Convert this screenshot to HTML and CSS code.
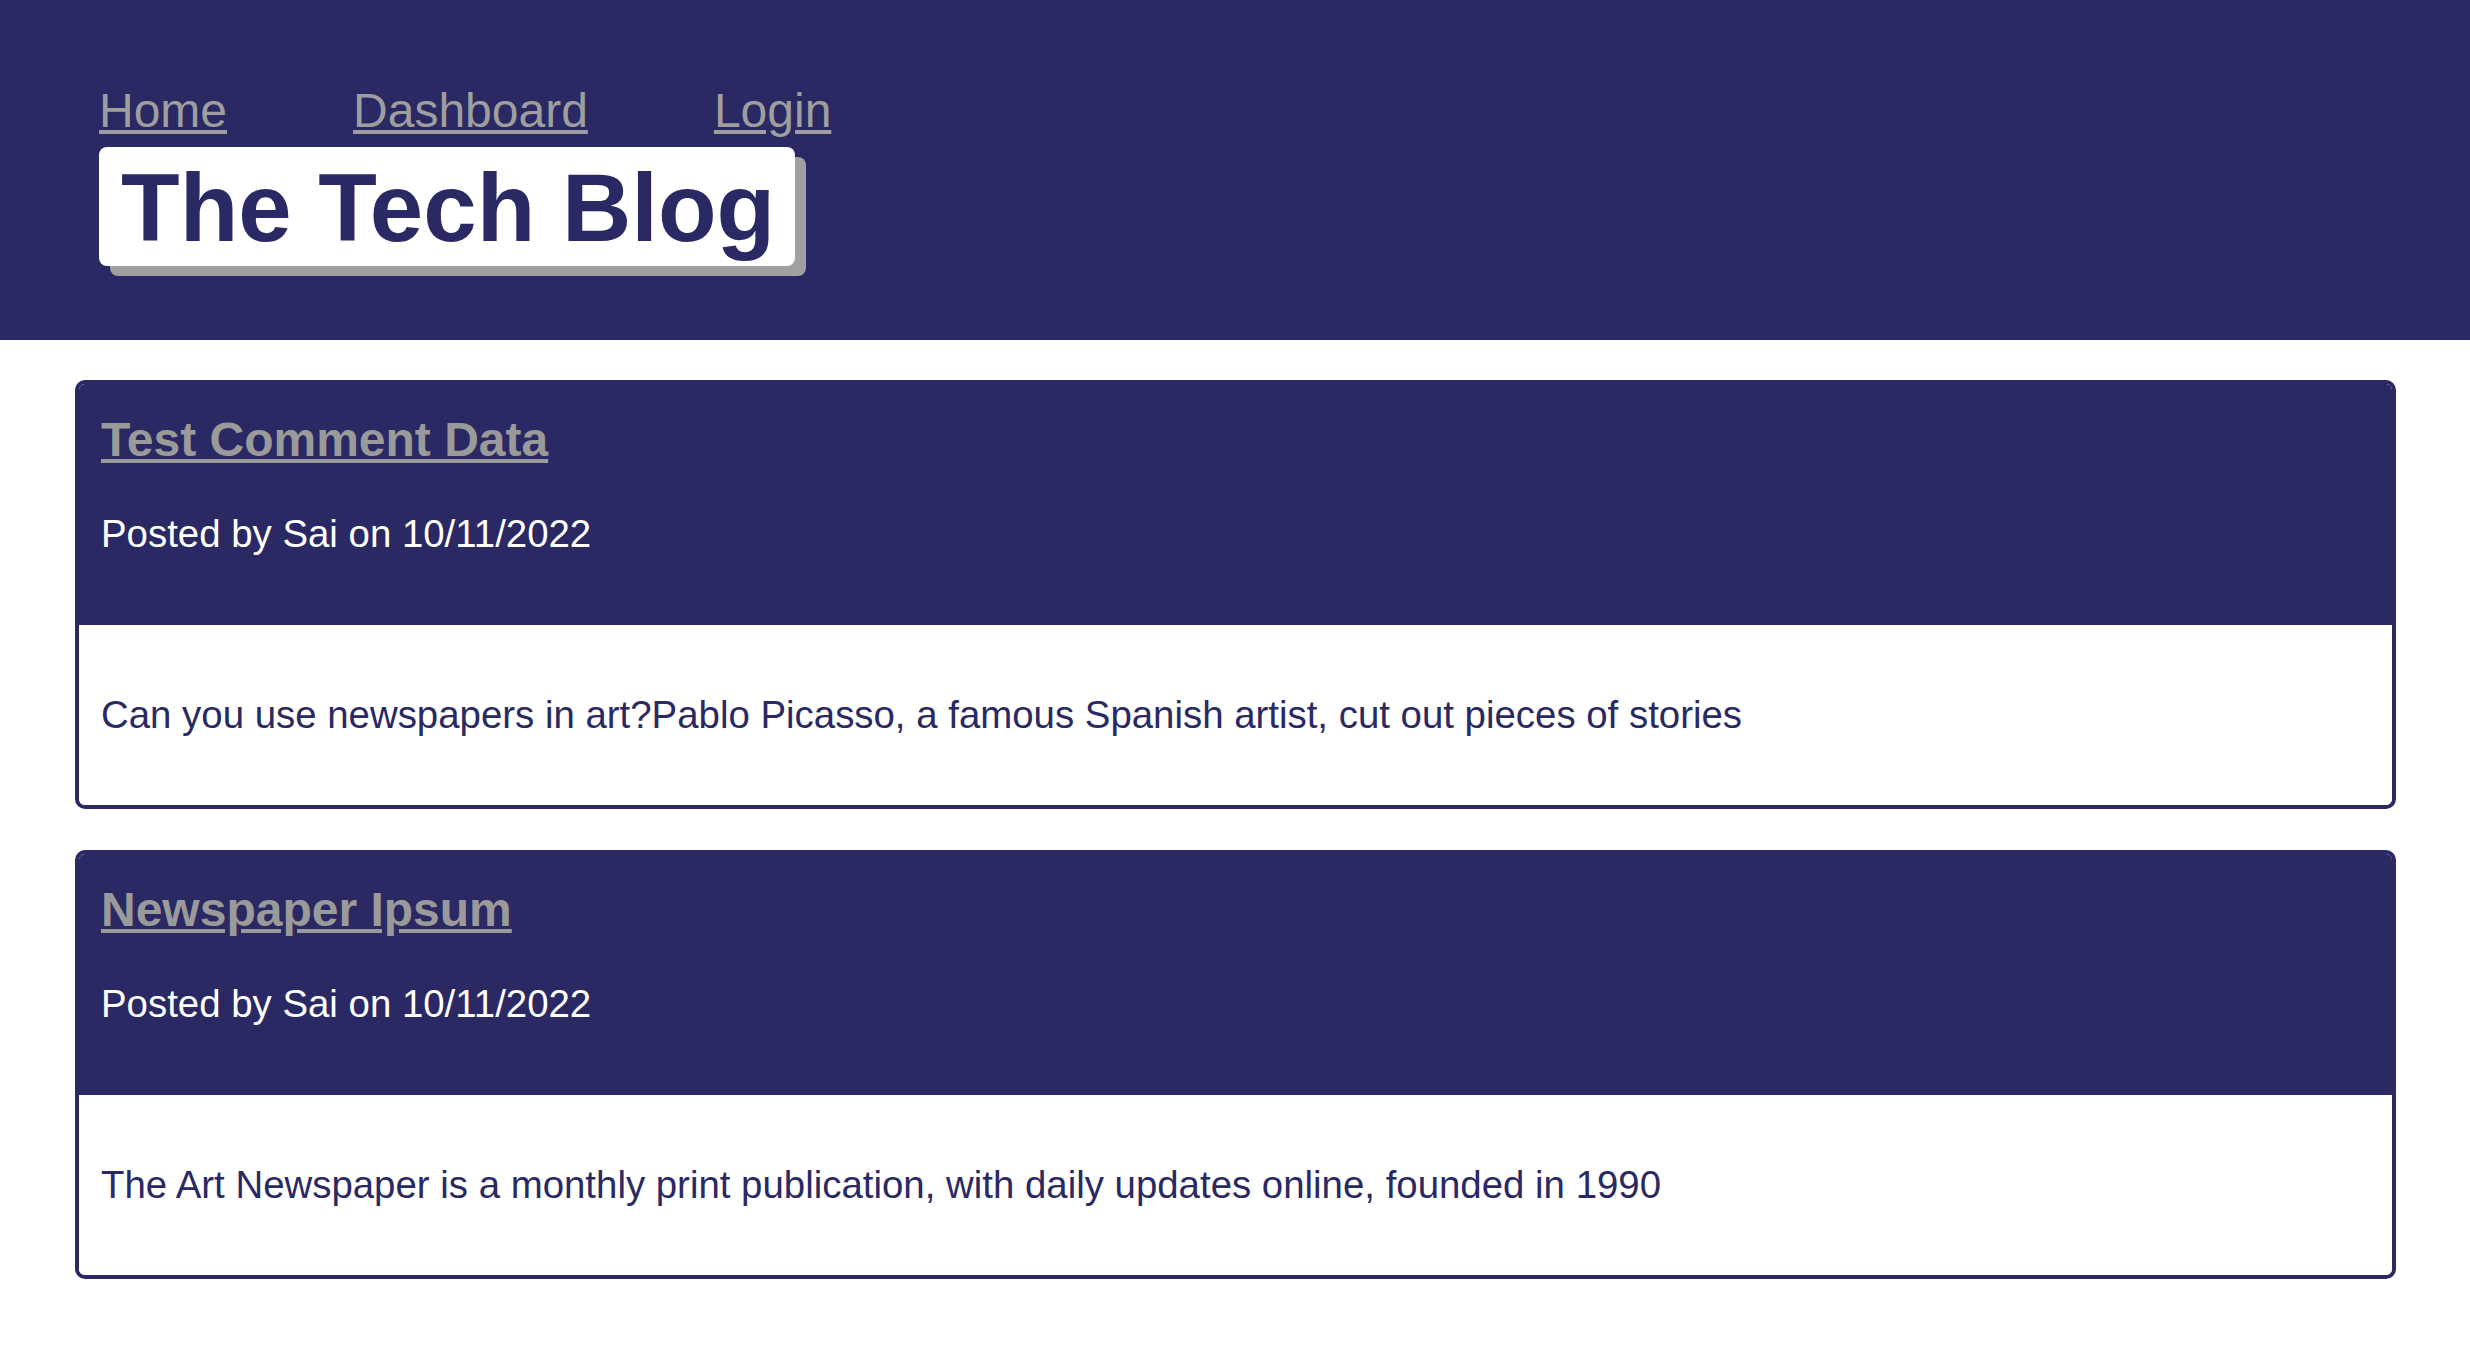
FILE: index.html
```html
<!DOCTYPE html>
<html lang="en">
<head>
<meta charset="utf-8">
<title>The Tech Blog</title>
<link rel="stylesheet" href="styles.css">
</head>
<body>
<header class="site-header">
  <nav class="nav">
    <a class="nav-link" href="#">Home</a>
    <a class="nav-link" href="#">Dashboard</a>
    <a class="nav-link" href="#">Login</a>
  </nav>
  <h1 class="brand">The Tech Blog</h1>
</header>
<main class="posts">
  <article class="post">
    <div class="post-head">
      <h2 class="post-title"><a href="#">Test Comment Data</a></h2>
      <p class="post-meta">Posted by Sai on 10/11/2022</p>
    </div>
    <div class="post-body">
      <p>Can you use newspapers in art?Pablo Picasso, a famous Spanish artist, cut out pieces of stories</p>
    </div>
  </article>
  <article class="post">
    <div class="post-head">
      <h2 class="post-title"><a href="#">Newspaper Ipsum</a></h2>
      <p class="post-meta">Posted by Sai on 10/11/2022</p>
    </div>
    <div class="post-body">
      <p>The Art Newspaper is a monthly print publication, with daily updates online, founded in 1990</p>
    </div>
  </article>
</main>
</body>
</html>
```

FILE: styles.css
```css
* { box-sizing: border-box; }

body {
  margin: 0;
  background: #ffffff;
  font-family: "Liberation Sans", Arial, sans-serif;
  color: #2a2963;
}

.site-header {
  background: #2a2963;
  height: 340px;
  padding: 83px 96px 0 99px;
  display: flex;
  flex-direction: column;
  align-items: flex-start;
}

.nav {
  display: flex;
  gap: 126px;
}

.nav-link {
  color: #9e9e9e;
  font-size: 48px;
  line-height: normal;
  text-decoration: underline;
}

.brand {
  margin: 9px 0 0 0;
  background: #ffffff;
  color: #2a2963;
  font-size: 96px;
  font-weight: bold;
  line-height: normal;
  padding: 6px 20px 3px 22px;
  border-radius: 8px;
  box-shadow: 11px 10px 0 #a0a0a0;
}

.posts {
  padding: 40px 74px 40px 75px;
  display: flex;
  flex-direction: column;
  gap: 41px;
}

.post {
  border: 4px solid #2a2963;
  border-radius: 10px;
  overflow: hidden;
}

.post-head {
  background: #2a2963;
  padding: 28px 22px 69px 22px;
}

.post-title {
  margin: 0 0 45px 0;
  font-size: 48px;
  font-weight: bold;
  line-height: normal;
}

.post-title a {
  color: #9a9a9a;
  text-decoration: underline;
}

.post-meta {
  margin: 0;
  color: #ffffff;
  font-size: 38.4px;
  line-height: normal;
}

.post-body {
  background: #ffffff;
  padding: 68px 22px 68px 22px;
}

.post-body p {
  margin: 0;
  font-size: 38.4px;
  line-height: normal;
  color: #2a2963;
}
```
